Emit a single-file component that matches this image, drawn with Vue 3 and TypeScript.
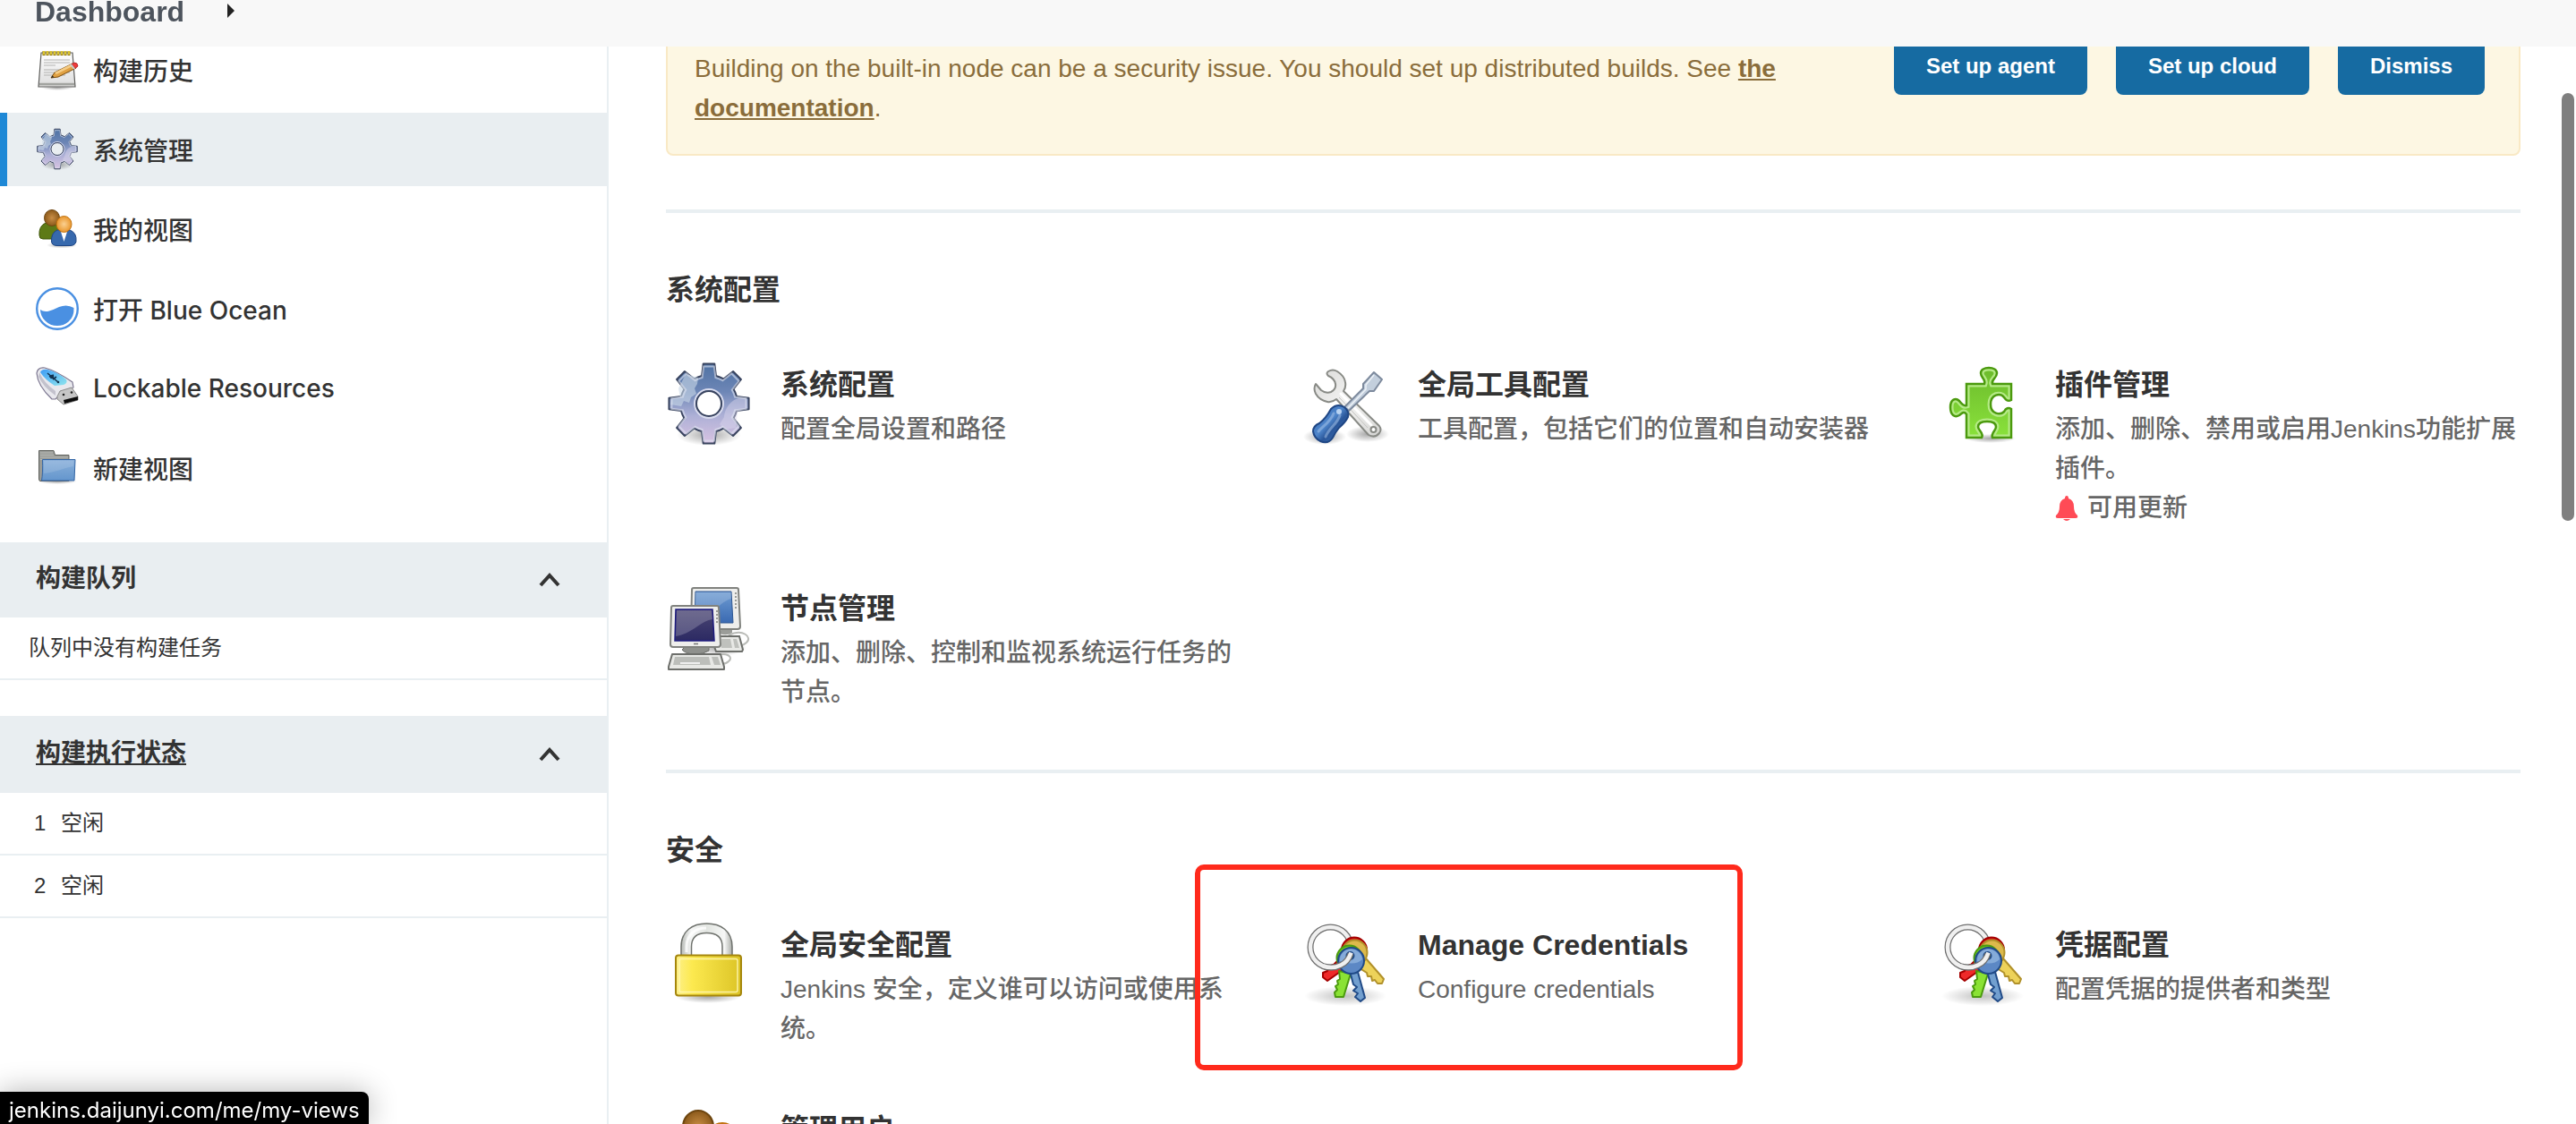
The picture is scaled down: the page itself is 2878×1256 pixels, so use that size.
<script setup lang="ts">
interface Task { icon: string; label: string; active?: boolean }
interface Item { icon: string; title: string; text: string; badge?: string; marked?: boolean }
interface Section { title: string; items: Item[] }

const tasks: Task[] = [
  { icon: 'notepad', label: '构建历史' },
  { icon: 'gear', label: '系统管理', active: true },
  { icon: 'people', label: '我的视图' },
  { icon: 'ocean', label: '打开 Blue Ocean' },
  { icon: 'usb', label: 'Lockable Resources' },
  { icon: 'folder', label: '新建视图' },
]

const sections: Section[] = [
  {
    title: '系统配置',
    items: [
      { icon: 'gear', title: '系统配置', text: '配置全局设置和路径' },
      { icon: 'tools', title: '全局工具配置', text: '工具配置，包括它们的位置和自动安装器' },
      { icon: 'puzzle', title: '插件管理', text: '添加、删除、禁用或启用Jenkins功能扩展插件。', badge: '可用更新' },
      { icon: 'computers', title: '节点管理', text: '添加、删除、控制和监视系统运行任务的节点。' },
    ],
  },
  {
    title: '安全',
    items: [
      { icon: 'lock', title: '全局安全配置', text: 'Jenkins 安全，定义谁可以访问或使用系统。' },
      { icon: 'keys', title: 'Manage Credentials', text: 'Configure credentials', marked: true },
      { icon: 'keys', title: '凭据配置', text: '配置凭据的提供者和类型' },
      { icon: 'people', title: '管理用户', text: '' },
    ],
  },
]

const executors: { id: number; state: string }[] = [
  { id: 1, state: '空闲' },
  { id: 2, state: '空闲' },
]

// Outline of an eight-toothed gear: a round body with tapered teeth.
function gearPath(cx: number, cy: number, tip: number, body: number): string {
  const at = (r: number, a: number) =>
    `${(cx + r * Math.sin(a)).toFixed(2)} ${(cy - r * Math.cos(a)).toFixed(2)}`
  let d = ''
  for (let k = 0; k < 8; k++) {
    const a = (k * Math.PI) / 4
    d += `${k ? `A${body} ${body} 0 0 1 ` : 'M'}${at(body, a - 0.25)}`
    d += `L${at(tip, a - 0.14)}L${at(tip, a + 0.14)}L${at(body, a + 0.25)}`
  }
  return `${d}A${body} ${body} 0 0 1 ${at(body, -0.25)}Z`
}
const gearOuter = gearPath(48, 47, 45, 32)
const gearInner = gearPath(48, 47, 42, 30)

const puzzlePath =
  'M29 25H49C51 20 45 18 45 13C45 9 49 7 54 7C59 7 63 9 63 13C63 19 56 20 58 25H79V43C75 45 73 43 71 40' +
  'C67 35 56 36 56 48C56 59 67 60 71 56C73 52 76 51 79 53V85H58C56 80 62 77 62 73' +
  'C62 69 58 67 52 67C46 67 42 69 42 73C42 77 49 80 46 85H29V59C26 55 24 58 21 60C16 63 11 60 11 51' +
  'C11 42 17 40 21 44C24 48 26 50 29 49Z'
</script>

<template>
  <div class="page">
    <svg class="sprite" aria-hidden="true">
      <defs>
        <linearGradient id="g-gear" x1="0" y1="0" x2="0" y2="1">
          <stop offset="0" stop-color="#4f72a3" /><stop offset=".35" stop-color="#6d86b6" />
          <stop offset=".65" stop-color="#adb0d6" /><stop offset="1" stop-color="#d8c3e2" />
        </linearGradient>
        <radialGradient id="g-shadow">
          <stop offset="0" stop-color="#000" stop-opacity=".35" /><stop offset="1" stop-color="#000" stop-opacity="0" />
        </radialGradient>
        <linearGradient id="g-steel" x1="0" y1="0" x2="1" y2="1">
          <stop offset="0" stop-color="#d9d9d7" /><stop offset=".5" stop-color="#f4f4f3" /><stop offset="1" stop-color="#d4d4d2" />
        </linearGradient>
        <linearGradient id="g-green" x1="0" y1="0" x2="0" y2="1">
          <stop offset="0" stop-color="#6cbb2c" /><stop offset="1" stop-color="#8ae23b" />
        </linearGradient>
        <linearGradient id="g-gold">
          <stop offset="0" stop-color="#fdf08a" /><stop offset=".25" stop-color="#fce94f" /><stop offset="1" stop-color="#dcc426" />
        </linearGradient>
        <linearGradient id="g-shackle">
          <stop offset="0" stop-color="#b9bcb8" /><stop offset=".2" stop-color="#f6f7f6" /><stop offset=".5" stop-color="#e2e5e1" />
          <stop offset=".85" stop-color="#f6f7f6" /><stop offset="1" stop-color="#a9aca7" />
        </linearGradient>
        <linearGradient id="g-screen-a" x1="0" y1="0" x2="0" y2="1">
          <stop offset="0" stop-color="#6f9cd2" /><stop offset="1" stop-color="#3a6ab2" />
        </linearGradient>
        <linearGradient id="g-screen-b" x1="0" y1="0" x2="0" y2="1">
          <stop offset="0" stop-color="#4b4673" /><stop offset="1" stop-color="#2c2a63" />
        </linearGradient>
        <linearGradient id="g-folder" x1="0" y1="0" x2="0" y2="1">
          <stop offset="0" stop-color="#8ab0da" /><stop offset="1" stop-color="#6496cd" />
        </linearGradient>
        <linearGradient id="g-page" x1="0" y1="0" x2="0" y2="1">
          <stop offset="0" stop-color="#fff" /><stop offset="1" stop-color="#dcdcdc" />
        </linearGradient>
        <linearGradient id="g-blue" x1="0" y1="0" x2="1" y2="1">
          <stop offset="0" stop-color="#2e62ac" /><stop offset=".45" stop-color="#4f86cb" /><stop offset=".6" stop-color="#2a5699" /><stop offset="1" stop-color="#4377bd" />
        </linearGradient>
        <linearGradient id="g-panel" x1="0" y1="0" x2="1" y2="1">
          <stop offset="0" stop-color="#3f9cf5" /><stop offset="1" stop-color="#8fe6ee" />
        </linearGradient>
        <radialGradient id="g-brown"><stop offset="0" stop-color="#c98e46" /><stop offset="1" stop-color="#8c5a1b" /></radialGradient>
        <radialGradient id="g-skin"><stop offset="0" stop-color="#fbd091" /><stop offset="1" stop-color="#e9962c" /></radialGradient>
        <clipPath id="puzzle-clip"><path :d="puzzlePath" /></clipPath>
      </defs>

      <symbol id="i-gear" viewBox="0 0 96 96">
        <ellipse cx="48" cy="82" rx="36" ry="12" fill="url(#g-shadow)" />
        <mask id="gear-hole"><rect width="96" height="96" fill="#fff" /><circle cx="48" cy="47" r="14" fill="#000" /></mask>
        <g mask="url(#gear-hole)">
          <path :d="gearOuter" fill="url(#g-gear)" stroke="#39445f" stroke-width="2" stroke-linejoin="round" />
          <path d="M14 30L22 14 36 18 35 25 32 30 34 36 28 40 26 46 20 44 17 50 5 48 6 42 16 40Z" fill="#c9d8e8" opacity=".6" />
          <path d="M90 41C76 38 66 50 65 62L60 70 66 76 78 74 80 56 90 52Z" fill="#dcd6ee" opacity=".45" />
          <path :d="gearInner" fill="none" stroke="#dfe4f2" stroke-opacity=".6" stroke-width="2" />
        </g>
        <circle cx="48" cy="47" r="16" fill="none" stroke="#d9dcee" stroke-width="2" />
        <circle cx="48" cy="47" r="14" fill="none" stroke="#39445f" stroke-width="2" />
      </symbol>

      <symbol id="i-tools" viewBox="0 0 96 96">
        <ellipse cx="24" cy="84" rx="24" ry="9" fill="url(#g-shadow)" />
        <ellipse cx="72" cy="81" rx="24" ry="9" fill="url(#g-shadow)" />
        <path d="M28 11Q33 8 38 11 46 16 47 23 48 29 45 33L85 72Q88 76 85 80 80 86 73 82L37 42Q32 46 27 45 18 43 14 36 11 30 14 25L20 32Q25 36 31 34 37 31 36 25 35 19 28 16 25 13 28 11Z" fill="url(#g-steel)" stroke="#888a85" stroke-width="2" stroke-linejoin="round" />
        <path d="M42 36L76 71" stroke="#fff" stroke-width="3" stroke-linecap="round" />
        <path d="M40 40L72 74" stroke="#c4c4c2" stroke-width="1" />
        <circle cx="78.500" cy="76" r="3" fill="#fff" stroke="#888a85" stroke-width="2" />
        <path d="M79 12L88 20 79 33 74 33 51 55 46 51 67 30 67 25Z" fill="#c3cfdd" stroke="#7d8a9d" stroke-width="2" stroke-linejoin="round" />
        <path d="M79 15L70 26 70 31 50 52" fill="none" stroke="#edf2f7" stroke-width="1.500" />
        <path d="M31 53Q38 46 46 51 52 56 50 62 47 68 40 74 36 79 33 85 28 93 19 89 12 85 11 78 11 72 18 69 25 64 31 53Z" fill="url(#g-blue)" stroke="#1f4684" stroke-width="2" />
        <path d="M34 58C30 68 22 72 17 78M41 60C38 70 29 74 25 84" fill="none" stroke="#a9c6ea" stroke-width="3" stroke-linecap="round" opacity=".5" />
        <circle cx="40" cy="56" r="3" fill="#b9d3f2" />
      </symbol>

      <symbol id="i-puzzle" viewBox="0 0 96 96">
        <ellipse cx="56" cy="86" rx="28" ry="5" fill="url(#g-shadow)" />
        <path :d="puzzlePath" fill="url(#g-green)" />
        <path :d="puzzlePath" clip-path="url(#puzzle-clip)" fill="none" stroke="#b5ea86" stroke-width="7" />
        <path :d="puzzlePath" fill="none" stroke="#4b9a0e" stroke-width="2.500" />
      </symbol>

      <symbol id="i-computers" viewBox="0 0 96 96">
        <ellipse cx="60" cy="70" rx="30" ry="9" fill="url(#g-shadow)" />
        <path d="M70 56C86 48 97 58 90 64 87 67 82 68 79 69M54 79C68 74 76 80 70 85 68 87 65 88 62 88" fill="none" stroke="#b9bbb7" stroke-width="2" />
        <path d="M50 57H82L86 72 85 74H56Z" fill="#e8e9e6" stroke="#6d6f6b" stroke-width="2" />
        <path d="M62 60H72L74 70H62ZM75 60H79L82 70H77Z" fill="#bfc1bd" />
        <path d="M62 48H74V53Q68 57 60 54Z" fill="#9b9d99" />
        <path d="M31 3H79Q81 3 81 5L83 46Q83 49 80 49H31Q28 49 28 46L29 5Q29 3 31 3Z" fill="#eeeeec" stroke="#80827e" stroke-width="2" />
        <path d="M33 7H73L75 42H32Z" fill="url(#g-screen-a)" stroke="#2e5792" stroke-width="1" />
        <path d="M33 8H73L73 15C60 18 54 34 32 36Z" fill="#fff" opacity=".18" />
        <path d="M78 8V26" stroke="#999b97" stroke-width="2" stroke-dasharray="2 2" />
        <path d="M22 68H48V73Q42 77 33 77 22 77 18 72Z" fill="#8f918d" stroke="#6d6f6b" />
        <path d="M8 23H57Q59 23 59 25L61 66Q61 69 58 69H8Q5 69 5 66L6 25Q6 23 8 23Z" fill="#eeeeec" stroke="#80827e" stroke-width="2" />
        <path d="M11 27H52L54 62H10Z" fill="url(#g-screen-b)" stroke="#1c1a7e" stroke-width="1.500" />
        <path d="M12 28H51L52 38C38 40 30 54 11 57Z" fill="#fff" opacity=".2" />
        <path d="M57 28V44" stroke="#999b97" stroke-width="2" stroke-dasharray="2 2" />
        <path d="M31 65.500H36" stroke="#777" stroke-width="1.500" />
        <path d="M7 77H61L65 91V94H3V91Z" fill="#e8e9e6" stroke="#6d6f6b" stroke-width="2" stroke-linejoin="round" />
        <path d="M10 80H48L50 89H8ZM51 80H58L61 89H54Z" fill="#bcbeba" />
        <path d="M16 87H38" stroke="#eee" stroke-width="2" />
      </symbol>

      <symbol id="i-lock" viewBox="0 0 96 96">
        <ellipse cx="47" cy="84" rx="36" ry="7" fill="url(#g-shadow)" />
        <path d="M17 38V28C17 10 30 2 45.500 2S74 10 74 28V38H63V28C63 17 56 12.500 45.500 12.500S28.500 17 28.500 28V38Z" fill="url(#g-shackle)" stroke="#6f726d" stroke-width="1.500" />
        <path d="M23 34V28C23 14 33 7 45 7" fill="none" stroke="#fff" stroke-width="3" opacity=".8" />
        <rect x="11" y="37.500" width="73" height="45" rx="3" fill="url(#g-gold)" stroke="#a5860c" stroke-width="2" />
        <rect x="15" y="41.500" width="65" height="37" rx="2" fill="none" stroke="#fff8b8" stroke-width="1.500" opacity=".85" />
      </symbol>

      <symbol id="i-keys" viewBox="0 0 96 96">
        <ellipse cx="47" cy="83" rx="46" ry="11" fill="url(#g-shadow)" opacity=".7" />
        <circle cx="30.500" cy="28.500" r="22.500" fill="none" stroke="#6e6e6e" stroke-width="7" />
        <circle cx="30.500" cy="28.500" r="22.500" fill="none" stroke="#f0f0f0" stroke-width="4.500" />
        <g stroke-width="2" stroke-linejoin="round">
          <path d="M44 38L34 48 29 50 27 55 22 57 22 62 27 66 44 54Z" fill="#ef2929" stroke="#a40000" />
          <circle cx="57" cy="31.500" r="14" fill="#d81e1e" stroke="#a40000" />
          <path d="M70 41L90 64 88 69 83 69 80 65 77 66 76 61 72 61 71 57 63 52Z" fill="#edd25a" stroke="#b1912a" />
          <circle cx="57.500" cy="34.500" r="14" fill="#dcb94b" stroke="#b1912a" />
          <path d="M40 55L53 58 45 84H36L35 79 38 76 36 72 39 70 38 66 41 64Z" fill="#8ae234" stroke="#4b9a0e" />
          <circle cx="51.500" cy="40.500" r="14" fill="#73d216" stroke="#4b9a0e" />
          <path d="M52 55L61 56 69 85 64 89 58 84 61 80 56 77 60 73 56 70Z" fill="#729fcf" stroke="#204a87" />
          <circle cx="53.500" cy="43.500" r="14.500" fill="#5c88c5" stroke="#204a87" />
          <path d="M41 44A12.500 12.500 0 0 1 66 42Q58 50 41 44Z" fill="#85abd9" stroke="none" />
          <circle cx="52.500" cy="38" r="4" fill="#4d7a3c" stroke="#204a87" />
        </g>
        <path d="M53 35.500Q50 45 42 48.500 33 53 24 50" fill="none" stroke="#6e6e6e" stroke-width="7" />
        <path d="M53.500 34.500Q50 45 42 48.500 33 53 22 49.500" fill="none" stroke="#f0f0f0" stroke-width="4.500" />
      </symbol>

      <symbol id="i-notepad" viewBox="0 0 48 48">
        <ellipse cx="24" cy="44" rx="18" ry="3" fill="url(#g-shadow)" />
        <path d="M6 5H41L44 43H3Z" fill="url(#g-page)" stroke="#5e5e5c" stroke-width="1.200" />
        <path d="M4 40H43" stroke="#a2a4a0" stroke-width="2.500" />
        <path d="M9 13H38M9 16H38M9 19H22M9 24H38M9 27H38M9 30H33" stroke="#b3b3b1" />
        <path d="M9 3V8M13 3V8M17 3V8M21 3V8M25 3V8M29 3V8M33 3V8M37 3V8" stroke="#8b7300" stroke-width="3" />
        <path d="M9 3V7M13 3V7M17 3V7M21 3V7M25 3V7M29 3V7M33 3V7M37 3V7" stroke="#f5de3d" stroke-width="1.500" />
        <path d="M17 33L21 27 41 17 45 22 25 32Z" fill="#e0a143" stroke="#7d4d0b" />
        <path d="M21 27L41 17 43 19 23 29Z" fill="#f5cd86" />
        <path d="M40 17.500L43 16Q47 16 47 20L44 22.500Z" fill="#ef3b3b" stroke="#a61d1d" stroke-width=".8" />
        <path d="M38 18.500L40 17.500 44 22.500 42 23.500Z" fill="#c9cbc7" />
        <path d="M17 33L18.500 30.500 20.500 32.200Z" fill="#222" />
      </symbol>

      <symbol id="i-people" viewBox="0 0 48 48">
        <ellipse cx="29" cy="42" rx="17" ry="3.500" fill="url(#g-shadow)" />
        <path d="M4 31Q3 21 11 17H23Q30 22 29 35H8Q4 35 4 31Z" fill="#5d7a16" stroke="#3d5407" />
        <ellipse cx="18" cy="11.500" rx="8.500" ry="9" fill="url(#g-brown)" stroke="#6e4610" />
        <path d="M17.500 38Q17 28 24 25H38Q46 28 45 38 44 42.500 38 42.500H24Q18 42.500 17.500 38Z" fill="#3769ad" stroke="#1f4684" />
        <path d="M28 27H35L31.500 38Z" fill="#fff" />
        <ellipse cx="31.500" cy="18.500" rx="8.500" ry="9" fill="url(#g-skin)" stroke="#c0700d" />
      </symbol>

      <symbol id="i-ocean" viewBox="0 0 48 48">
        <circle cx="24" cy="24" r="22.800" fill="#fff" stroke="#4a90e2" stroke-width="2.400" />
        <path d="M5 25Q9 28 15 26.500 20 25 26 22 35 18.500 42.500 23 43 33 36.500 38.500 31 43 24 43 16 43 10.500 37.500 5 32 5 25Z" fill="#4a90e2" />
      </symbol>

      <symbol id="i-usb" viewBox="0 0 48 48">
        <path d="M1 7Q2 0 10 1 22 4 41 17L42 23 30 28 22 36 18 36Q2 21 1 7Z" fill="#e9e9ee" stroke="#7c7690" stroke-width="1.200" />
        <path d="M3 11Q8 22 22 32V27Q9 18 4 6Z" fill="#c3c2cd" />
        <path d="M5 6Q7 2 13 3 25 6 34 14 36 18 31 20L21 21Q10 14 5 6Z" fill="url(#g-panel)" />
        <path d="M13 7L25 17M15 11L20 9M19 14L23 11" stroke="#12324f" stroke-width="1.600" />
        <circle cx="18" cy="11" r="2.300" fill="#12324f" /><circle cx="25" cy="17" r="1.300" fill="#12324f" />
        <path d="M24 33L27 27 40 23 47 33 47 37 31 42 24 36Z" fill="#c6c6c6" stroke="#8b8b8b" />
        <path d="M31 37L47 33V37L32 41Z" fill="#0c0c0c" />
        <circle cx="31" cy="31" r="1.300" fill="#222" /><circle cx="40" cy="28.500" r="1.300" fill="#222" />
      </symbol>

      <symbol id="i-folder" viewBox="0 0 48 48">
        <ellipse cx="24" cy="39" rx="22" ry="3" fill="url(#g-shadow)" />
        <path d="M3.500 4.500H20L21.500 9.500H37V38.500H5Q3.500 38.500 3.500 36Z" fill="#999b97" stroke="#5f615d" />
        <path d="M5 7H19M5 9.500H20M5 12H36M5 14.500H36" stroke="#b7b9b5" />
        <path d="M7.500 14.500H44L43 38H6.500Q8 30 7.500 14.500Z" fill="url(#g-folder)" stroke="#3465a4" />
        <path d="M9 16H42.500L42 22C30 24 22 29 9 30Z" fill="#fff" opacity=".13" />
      </symbol>
    </svg>

    <header class="crumbs">
      <a class="crumb" href="#">Dashboard</a>
      <svg class="crumb-arrow" viewBox="0 0 8 16"><path d="M0 0L8 8 0 16Z" fill="#222" /></svg>
    </header>

    <div class="columns">
      <aside class="side">
        <nav class="tasks">
          <a v-for="t in tasks" :key="t.label" href="#" class="task" :class="{ active: t.active }">
            <svg class="task-icon"><use :href="'#i-' + t.icon" /></svg>
            <span>{{ t.label }}</span>
          </a>
        </nav>

        <section class="pane">
          <div class="pane-head">
            <span class="pane-title">构建队列</span>
            <button class="toggle" type="button" aria-label="收起构建队列">
              <svg viewBox="0 0 24 16"><path d="M2 14L12 3 22 14" fill="none" stroke="#333" stroke-width="4" /></svg>
            </button>
          </div>
          <p class="queue">队列中没有构建任务</p>
        </section>

        <section class="pane">
          <div class="pane-head linked">
            <a class="pane-title" href="#">构建执行状态</a>
            <button class="toggle" type="button" aria-label="收起构建执行状态">
              <svg viewBox="0 0 24 16"><path d="M2 14L12 3 22 14" fill="none" stroke="#333" stroke-width="4" /></svg>
            </button>
          </div>
          <table class="executors">
            <tbody>
              <tr v-for="e in executors" :key="e.id">
                <td class="num">{{ e.id }}</td>
                <td>{{ e.state }}</td>
              </tr>
            </tbody>
          </table>
        </section>
      </aside>

      <main class="main">
        <div class="alert">
          <p class="alert-text">
            Building on the built-in node can be a security issue. You should set up distributed builds. See
            <a href="#">the documentation</a>.
          </p>
          <div class="alert-actions">
            <button type="button">Set up agent</button>
            <button type="button">Set up cloud</button>
            <button type="button">Dismiss</button>
          </div>
        </div>

        <section v-for="s in sections" :key="s.title" class="section">
          <h2>{{ s.title }}</h2>
          <div class="grid">
            <a v-for="i in s.items" :key="i.title" href="#" class="item">
              <svg class="item-icon"><use :href="'#i-' + i.icon" /></svg>
              <div class="item-body">
                <h3>{{ i.title }}</h3>
                <p v-if="i.text">{{ i.text }}</p>
                <p v-if="i.badge" class="badge">
                  <svg viewBox="0 0 26 28"><path d="M13 0Q15 0 15 3 21 5 21 12 21 19 25 22 26 25 23 25H3Q0 25 1 22 5 19 5 12 5 5 11 3 11 0 13 0ZM9 26H17Q15 28 13 28T9 26Z" fill="#ff4b56" /></svg>
                  {{ i.badge }}
                </p>
              </div>
              <span v-if="i.marked" class="marker"></span>
            </a>
          </div>
        </section>
      </main>
    </div>

    <div class="status">jenkins.daijunyi.com/me/my-views</div>
    <div class="scroll-thumb"></div>
  </div>
</template>

<style>
body {
  margin: 0;
  background: #fff;
}
</style>

<style scoped>
.page {
  position: relative;
  height: 100vh;
  overflow: hidden;
  font-family: "Liberation Sans", "Noto Sans CJK SC", sans-serif;
  font-size: 28px;
  color: #333;
}
a {
  color: inherit;
  text-decoration: none;
}
h2, h3, p {
  margin: 0;
}
.sprite {
  position: absolute;
  width: 0;
  height: 0;
}
.crumbs {
  position: fixed;
  top: 0;
  left: 0;
  right: 0;
  z-index: 5;
  box-sizing: border-box;
  display: flex;
  gap: 48px;
  height: 52px;
  padding-left: 39px;
  background: #f8f8f8;
}
.crumb {
  font-size: 32px;
  line-height: 26px;
  font-weight: 700;
  color: #4d545d;
}
.crumb-arrow {
  width: 8px;
  height: 16px;
  margin-top: 4px;
}
.columns {
  display: flex;
  min-height: 100vh;
}
.side {
  flex: 0 0 678px;
  border-right: 2px solid #e9eff2;
}
.tasks {
  display: flex;
  flex-direction: column;
  gap: 7px;
  padding: 37px 0 42px;
}
.task {
  display: flex;
  align-items: center;
  gap: 16px;
  height: 82px;
  padding-left: 40px;
  font-family: Inter, "Noto Sans CJK SC", sans-serif;
  font-weight: 500;
}
.task.active {
  padding-left: 32px;
  border-left: 8px solid #1e88d6;
  background: #e9eef1;
}
.task-icon {
  width: 48px;
  height: 48px;
}
.pane {
  margin-bottom: 40px;
}
.pane-head {
  display: flex;
  align-items: center;
  justify-content: space-between;
  height: 84px;
  padding: 0 52px 0 40px;
  background: #e9eef1;
}
.pane-head.linked {
  height: 86px;
}
.pane-title {
  line-height: 44px;
  padding-bottom: 2px;
  font-weight: 700;
}
a.pane-title {
  text-decoration: underline;
}
.toggle {
  width: 24px;
  height: 16px;
  padding: 0;
  border: 0;
  background: none;
}
.toggle svg {
  display: block;
}
.queue {
  padding: 0 32px;
  border-bottom: 2px solid #e9eff2;
  font-size: 24px;
  line-height: 68px;
}
.executors {
  width: 100%;
  border-collapse: collapse;
  font-size: 24px;
  line-height: 68px;
}
.executors tr {
  border-bottom: 2px solid #e9eff2;
}
.executors td {
  padding: 0;
}
.executors .num {
  width: 30px;
  padding-left: 38px;
}
.main {
  flex: 1;
  min-width: 0;
  padding: 20px 62px 0 64px;
}
.alert {
  box-sizing: border-box;
  display: flex;
  justify-content: space-between;
  height: 154px;
  margin-bottom: 60px;
  padding: 20px 38px 0 30px;
  border: 2px solid #f9e9c5;
  border-radius: 8px;
  background: #fdf7e3;
  color: #8a6d3b;
}
.alert-text {
  max-width: 1260px;
  padding-top: 13px;
  line-height: 44px;
}
.alert-text a {
  font-weight: 700;
  text-decoration: underline;
}
.alert-actions {
  display: flex;
  gap: 32px;
}
.alert-actions button {
  height: 64px;
  padding: 0 36px;
  border: 0;
  border-radius: 8px;
  background: #166ba2;
  color: #fff;
  font: 700 24px "Liberation Sans", sans-serif;
}
.section {
  padding: 64px 0;
  border-top: 4px solid #e9eff2;
}
h2, h3 {
  font-size: 32px;
  font-weight: 700;
}
h2 {
  line-height: 44px;
  margin-bottom: 58px;
}
h3 {
  line-height: 40px;
  margin-bottom: 8px;
}
.grid {
  display: grid;
  grid-template-columns: repeat(3, 1fr);
  gap: 64px;
}
.item {
  position: relative;
  display: flex;
  gap: 32px;
}
.item-icon {
  flex: none;
  width: 96px;
  height: 96px;
}
.item-body {
  flex: 1;
  padding-top: 6px;
}
.item-body p {
  font-weight: 500;
  line-height: 44px;
  color: #666;
}
.badge {
  display: flex;
  align-items: center;
  gap: 10px;
}
.badge svg {
  width: 26px;
  height: 28px;
}
.marker {
  position: absolute;
  top: -64px;
  left: -121px;
  box-sizing: border-box;
  width: 612px;
  height: 230px;
  border: 6px solid #ff2a1c;
  border-radius: 10px;
}
.status {
  position: fixed;
  left: 0;
  bottom: 0;
  z-index: 6;
  height: 36px;
  padding: 0 10px;
  border-top-right-radius: 8px;
  background: #000;
  box-shadow: 0 0 32px rgba(0, 0, 0, 0.3);
  color: #fff;
  font-family: Inter, sans-serif;
  font-size: 24px;
  line-height: 42px;
}
.scroll-thumb {
  position: fixed;
  top: 104px;
  right: 2px;
  width: 14px;
  height: 478px;
  border-radius: 7px;
  background: #7f7f7f;
}
</style>
